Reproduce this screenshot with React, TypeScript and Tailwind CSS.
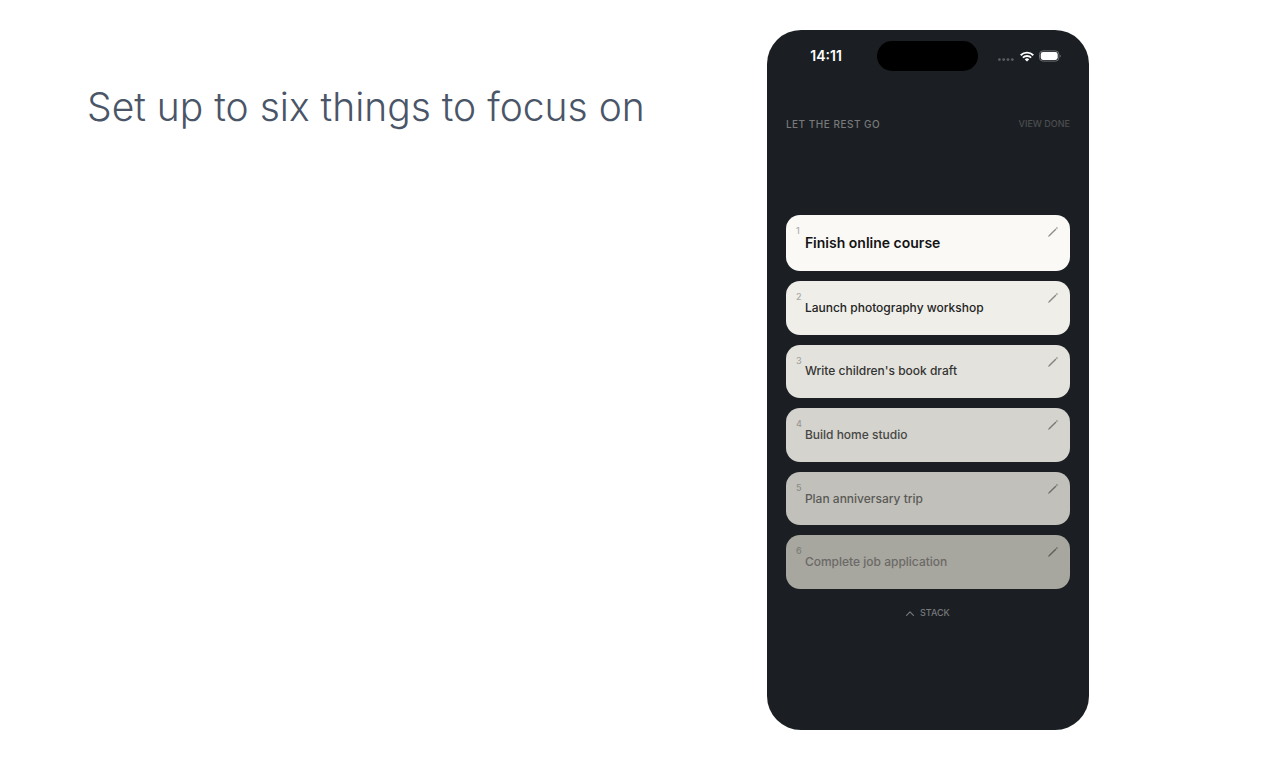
import clsx from 'clsx';

interface FocusItem {
  title: string;
  card: string;
  text: string;
  number: string;
  pencil: string;
}

const ITEMS: FocusItem[] = [
  { title: 'Finish online course', card: 'h-14 bg-[#faf9f6]', text: 'text-sm font-semibold text-[#141414]', number: 'text-[#b0afac]', pencil: 'text-[#8f8e8b]' },
  { title: 'Launch photography workshop', card: 'flex-1 bg-[#efeee9]', text: 'text-xs font-medium text-[#232323]', number: 'text-[#aaa9a5]', pencil: 'text-[#898885]' },
  { title: "Write children's book draft", card: 'flex-1 bg-[#e3e2dd]', text: 'text-xs font-medium text-[#343433]', number: 'text-[#a3a29e]', pencil: 'text-[#82817e]' },
  { title: 'Build home studio', card: 'flex-1 bg-[#d4d3ce]', text: 'text-xs font-medium text-[#474745]', number: 'text-[#999894]', pencil: 'text-[#797975]' },
  { title: 'Plan anniversary trip', card: 'flex-1 bg-[#c1c0ba]', text: 'text-xs font-medium text-[#5a5a57]', number: 'text-[#8e8d88]', pencil: 'text-[#6e6e6a]' },
  { title: 'Complete job application', card: 'flex-1 bg-[#a7a69f]', text: 'text-xs font-medium text-[#6b6a66]', number: 'text-[#7e7d78]', pencil: 'text-[#5f5f5b]' },
];

function WifiIcon() {
  return (
    <svg width="14" height="11" viewBox="0 0 14 11" fill="none" stroke="white" strokeWidth="1.9" aria-hidden="true">
      <path d="M0.7 4.2a9 9 0 0 1 12.6 0" />
      <path d="M2.9 6.6a5.9 5.9 0 0 1 8.2 0" />
      <path d="M7 10.6 4.8 8.4a3.1 3.1 0 0 1 4.4 0z" fill="white" stroke="none" />
    </svg>
  );
}

function BatteryIcon() {
  return (
    <svg width="22" height="12" viewBox="0 0 22 12" fill="none" aria-hidden="true">
      <rect x="0.5" y="0.9" width="19.4" height="10.2" rx="3.4" stroke="#6b6e71" />
      <rect x="1.7" y="2.1" width="17" height="7.8" rx="2.3" fill="white" />
      <path d="M20.9 4.4c1.1.5 1.1 2.7 0 3.2z" fill="#6b6e71" />
    </svg>
  );
}

function PencilIcon() {
  return (
    <svg width="10" height="10" viewBox="0 0 10 10" fill="none" stroke="currentColor" aria-hidden="true">
      <path d="M0.9 9.1 8 2" strokeWidth="1.4" />
      <path d="M8.5 1.5 9.4 0.6" strokeWidth="1.4" />
      <path d="M0.3 9.7 1.2 8.8" strokeWidth="0.8" />
    </svg>
  );
}

function StatusBar() {
  return (
    <div className="grid grid-cols-[1fr_101px_1fr] items-center pt-[11px]">
      <span className="pl-2 text-center text-sm font-semibold text-white">14:11</span>
      <div className="h-[30px] rounded-full bg-black" />
      <div className="flex items-center justify-end gap-[5px] pr-7">
        <svg width="18" height="11" viewBox="0 0 18 11" fill="#5b5e61" aria-hidden="true">
          <circle cx="2.4" cy="8.6" r="1.4" />
          <circle cx="6.7" cy="8.6" r="1.4" />
          <circle cx="11" cy="8.6" r="1.4" />
          <circle cx="15.3" cy="8.6" r="1.4" />
        </svg>
        <WifiIcon />
        <BatteryIcon />
      </div>
    </div>
  );
}

function FocusCard({ item, index }: { item: FocusItem; index: number }) {
  return (
    <li className={clsx('relative flex items-center rounded-[14px] px-[19px]', item.card)}>
      <span className={clsx('absolute left-2.5 top-2.5 text-[9px] font-medium leading-3', item.number)}>{index + 1}</span>
      <span className={item.text}>{item.title}</span>
      <button type="button" aria-label={`Edit ${item.title}`} className={clsx('absolute right-3 top-3', item.pencil)}>
        <PencilIcon />
      </button>
    </li>
  );
}

export default function App() {
  return (
    <main className="min-h-screen bg-white font-['Inter',sans-serif]">
      <div className="mx-auto flex max-w-[1096px] flex-wrap items-start gap-7 py-[30px]">
        <h1 className="pt-[52px] text-[39px] font-light leading-[50px] text-[#4a5568]">
          Set up to six things to focus on
        </h1>

        <div className="flex flex-1 justify-center">
          <section className="min-h-[700px] w-[322px] rounded-[34px] bg-[#1b1f23]">
            <StatusBar />

            <div className="px-[19px] pt-[45px]">
              <header className="flex items-center justify-between leading-4">
                <h2 className="text-[10px] font-medium tracking-wider text-[#78797a]">LET THE REST GO</h2>
                <button type="button" className="text-[9px] font-medium text-[#4b4d4f]">VIEW DONE</button>
              </header>

              <ol className="mt-[83px] flex h-[374px] flex-col gap-2.5">
                {ITEMS.map((item, i) => (
                  <FocusCard key={item.title} item={item} index={i} />
                ))}
              </ol>

              <button type="button" className="mx-auto mt-4 flex items-center gap-1.5 text-[9px] font-medium leading-4 text-[#77787a]">
                <svg width="8" height="5" viewBox="0 0 8 5" fill="none" stroke="currentColor" strokeWidth="1.2" aria-hidden="true">
                  <path d="M0.6 4.3 4 0.9l3.4 3.4" strokeLinecap="round" strokeLinejoin="round" />
                </svg>
                STACK
              </button>
            </div>
          </section>
        </div>
      </div>
    </main>
  );
}
